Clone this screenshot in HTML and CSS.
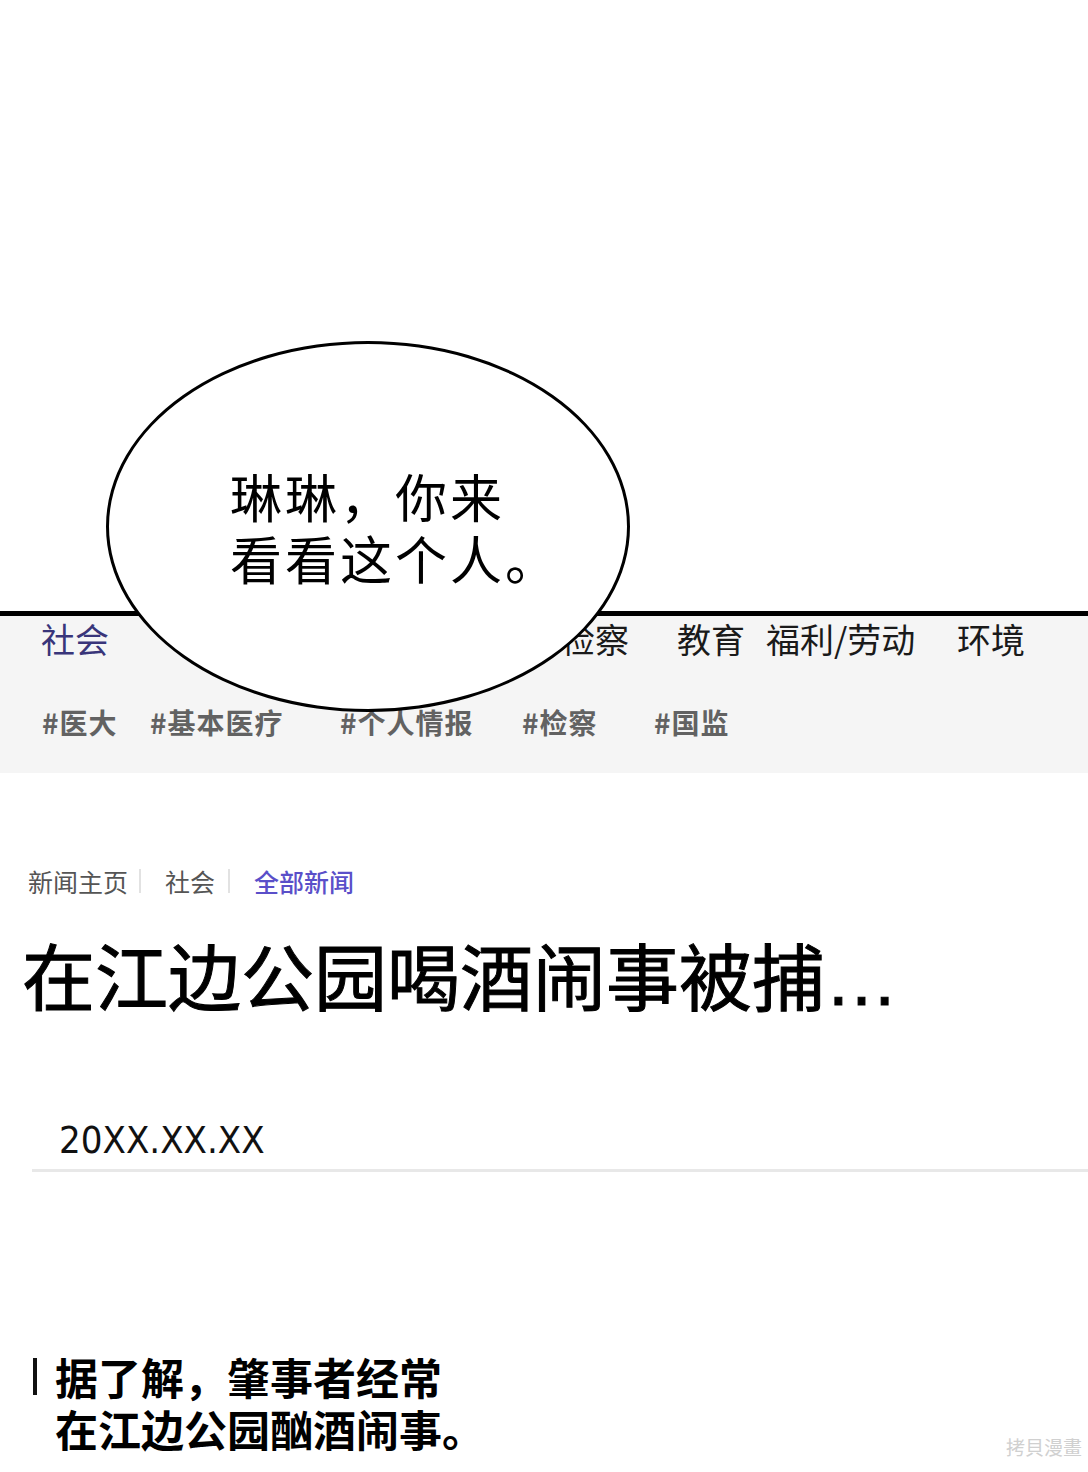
FILE: index.html
```html
<!DOCTYPE html>
<html lang="zh-CN">
<head>
    <meta charset="UTF-8">
    <meta name="viewport" content="width=device-width, initial-scale=1.0">
    <title>在江边公园喝酒闹事被捕</title>
    <link rel="stylesheet" href="styles.css">
</head>
<body>
<div class="page">
    <div class="sky"></div>

    <header class="site-header">
        <nav class="section-nav">
            <a class="current">社会</a>
            <a>事件事故</a>
            <a>法院</a>
            <a>检察</a>
            <a>教育</a>
            <a>福利/劳动</a>
            <a>环境</a>
        </nav>
        <div class="tags">
            <a>#医大</a>
            <a>#基本医疗</a>
            <a>#个人情报</a>
            <a>#检察</a>
            <a>#国监</a>
        </div>
    </header>

    <main class="article">
        <div class="crumbs">
            <a>新闻主页</a>
            <span class="sep"></span>
            <a>社会</a>
            <span class="sep"></span>
            <a class="active">全部新闻</a>
        </div>

        <h1 class="headline">在江边公园喝酒闹事被捕…</h1>

        <div class="dateline">
            <span>20XX.XX.XX</span>
        </div>

        <div class="lead">
            <i class="lead-bar"></i>
            <p>据了解，肇事者经常<br>在江边公园酗酒闹事。</p>
        </div>
    </main>

    <!-- 对话气泡 -->
    <div class="bubble">
        <p>琳琳，你来<br>看看这个人。</p>
    </div>

    <div class="watermark">拷貝漫畫</div>
</div>
</body>
</html>
```

FILE: styles.css
```css
* {
    box-sizing: border-box;
}
body {
    margin: 0;
    background: #fff;
    font-family: "Noto Sans CJK SC", "Noto Sans", sans-serif;
    color: #111;
}
.page {
    position: relative;
    width: 1088px;
    height: 1472px;
    overflow: hidden;
}
.sky {
    height: 611px;
}

/* header */
.site-header {
    border-top: 5px solid #000;
    background: #f5f5f5;
    height: 162px;
    padding-top: 3px;
}
.section-nav {
    display: grid;
    grid-template-columns: 175px 160px 185px 116px 89px 191px auto;
    padding-left: 41px;
    font-size: 34px;
    line-height: 40px;
    color: #1a1a1a;
}
.section-nav .current {
    color: #39357a;
}
.tags {
    display: grid;
    grid-template-columns: 108px 190px 182px 132px auto;
    padding-left: 42px;
    margin-top: 46px;
    font-size: 28px;
    line-height: 34px;
    letter-spacing: 1px;
    font-weight: 700;
    color: #626262;
}

/* article */
.article {
    padding-top: 93px;
}
.crumbs {
    display: flex;
    align-items: center;
    padding-left: 28px;
    font-size: 25px;
    line-height: 30px;
    color: #555;
}
.crumbs .sep {
    width: 2px;
    height: 24px;
    background: #e2e2e2;
    margin: 0 24px 0 11px;
}
.crumbs .sep + a {
    margin-right: 2px;
}
.crumbs .active {
    color: #5a4fc9;
    font-weight: 500;
}
.headline {
    margin: 42px 0 0;
    padding-left: 22px;
    font-family: "Liberation Sans", "Noto Sans CJK SC", sans-serif;
    font-size: 73px;
    line-height: 84px;
    font-weight: 400;
    -webkit-text-stroke: 1px #000;
    color: #000;
}
.dateline {
    margin: 95px 0 0 32px;
    padding: 0 0 6px 27px;
    border-bottom: 3px solid #e8e8e8;
    font-family: "DejaVu Sans", sans-serif;
    font-stretch: condensed;
    font-size: 38px;
    line-height: 46px;
    color: #111;
}
.lead {
    display: grid;
    grid-template-columns: 4px auto;
    column-gap: 18px;
    align-items: start;
    margin-top: 178px;
    padding-left: 33px;
}
.lead-bar {
    height: 37px;
    margin-top: 8px;
    background: #111;
}
.lead p {
    margin: 0;
    font-size: 43px;
    line-height: 52px;
    font-weight: 700;
    color: #000;
}

/* bubble */
.bubble {
    position: absolute;
    left: 106px;
    top: 341px;
    width: 524px;
    height: 371px;
    border: 3px solid #000;
    border-radius: 50%;
    background: #fff;
    display: flex;
    align-items: center;
    padding-left: 121px;
}
.bubble p {
    margin: 0;
    font-size: 52px;
    line-height: 62px;
    letter-spacing: 3px;
    color: #000;
}

.watermark {
    position: absolute;
    right: 6px;
    bottom: 12px;
    font-size: 19px;
    color: #d0d0d0;
    font-family: "Noto Sans CJK TC", "Noto Sans CJK SC", sans-serif;
}
```
